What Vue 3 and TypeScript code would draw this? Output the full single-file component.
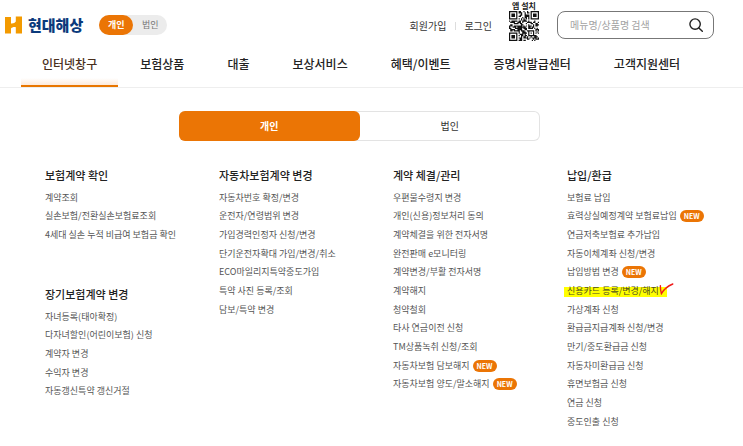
<script setup lang="ts">
import { ref } from 'vue'

interface MenuItem {
  label: string
  isNew?: boolean
  marked?: boolean
}
interface MenuSection {
  title: string
  items: MenuItem[]
}

const customer = ref('개인')
const panelTab = ref('개인')
const customerTypes = ['개인', '법인']
const keyword = ref('')

const mainNav = ['인터넷창구', '보험상품', '대출', '보상서비스', '혜택/이벤트', '증명서발급센터', '고객지원센터']

const plain = (...labels: string[]): MenuItem[] => labels.map((label) => ({ label }))

const columns: MenuSection[][] = [
  [
    {
      title: '보험계약 확인',
      items: plain('계약조회', '실손보험/전환실손보험료조회', '4세대 실손 누적 비급여 보험금 확인'),
    },
    {
      title: '장기보험계약 변경',
      items: plain('자녀등록(태아확정)', '다자녀할인(어린이보험) 신청', '계약자 변경', '수익자 변경', '자동갱신특약 갱신거절'),
    },
  ],
  [
    {
      title: '자동차보험계약 변경',
      items: plain(
        '자동차번호 확정/변경',
        '운전자/연령범위 변경',
        '가입경력인정자 신청/변경',
        '단기운전자확대 가입/변경/취소',
        'ECO마일리지특약중도가입',
        '특약 사진 등록/조회',
        '담보/특약 변경',
      ),
    },
  ],
  [
    {
      title: '계약 체결/관리',
      items: [
        ...plain(
          '우편물수령지 변경',
          '개인(신용)정보처리 동의',
          '계약체결을 위한 전자서명',
          '완전판매 e모니터링',
          '계약변경/부활 전자서명',
          '계약해지',
          '청약철회',
          '타사 연금이전 신청',
          'TM상품녹취 신청/조회',
        ),
        { label: '자동차보험 담보해지', isNew: true },
        { label: '자동차보험 양도/말소해지', isNew: true },
      ],
    },
  ],
  [
    {
      title: '납입/환급',
      items: [
        { label: '보험료 납입' },
        { label: '효력상실예정계약 보험료납입', isNew: true },
        { label: '연금저축보험료 추가납입' },
        { label: '자동이체계좌 신청/변경' },
        { label: '납입방법 변경', isNew: true },
        { label: '신용카드 등록/변경/해지', marked: true },
        ...plain(
          '가상계좌 신청',
          '환급금지급계좌 신청/변경',
          '만기/중도환급금 신청',
          '자동차미환급금 신청',
          '휴면보험금 신청',
          '연금 신청',
          '중도인출 신청',
        ),
      ],
    },
  ],
]

// 25x25 code: three finder squares, one alignment square, data modules elsewhere
const size = 25
function ring(x: number, y: number, cx: number, cy: number): number {
  return Math.max(Math.abs(x - cx), Math.abs(y - cy))
}
function isDark(x: number, y: number): boolean {
  for (const [cx, cy] of [[3, 3], [21, 3], [3, 21]]) {
    const r = ring(x, y, cx, cy)
    if (r <= 4) return r === 3 || r <= 1
  }
  const a = ring(x, y, 18, 18)
  if (a <= 2) return a !== 1
  if (x === 6 || y === 6) return (x + y) % 2 === 0
  const n = Math.sin(x * 12.9898 + y * 78.233) * 43758.5453
  return n - Math.floor(n) < 0.56
}
let qrPath = ''
for (let y = 0; y < size; y++) {
  for (let x = 0; x < size; x++) {
    if (isDark(x, y)) qrPath += `M${x} ${y}h1v1h-1z`
  }
}
</script>

<template>
  <div class="page">
    <header class="top">
      <a class="brand" href="#">
        <svg class="brand-mark" viewBox="0 0 17 18" aria-hidden="true">
          <path fill="#f39a00" d="M0 1H6V7.4C8 7.6 10 7.2 10.8 5.6V0.5H17V17.5H10.8V11.2C9 10.8 7 11.2 6 12.6V17.5H0Z" />
        </svg>
        <span class="brand-name">현대해상</span>
      </a>
      <div class="toggle">
        <button
          v-for="type in customerTypes"
          :key="type"
          type="button"
          :class="['toggle-btn', { on: customer === type }]"
          @click="customer = type"
        >{{ type }}</button>
      </div>
      <div class="account">
        <a href="#">회원가입</a>
        <a href="#" class="login">로그인</a>
      </div>
      <div class="app">
        <span>앱 설치</span>
        <svg class="qr" viewBox="0 0 25 25" aria-hidden="true"><path :d="qrPath" fill="#111" /></svg>
      </div>
      <form class="search" @submit.prevent>
        <input v-model="keyword" type="text" aria-label="메뉴명/상품명 검색" placeholder="메뉴명/상품명 검색" />
        <button type="submit" aria-label="검색">
          <svg viewBox="0 0 14 14" aria-hidden="true">
            <circle cx="6.1" cy="6.1" r="5.2" />
            <path d="M9.9 9.9L13.3 13.3" />
          </svg>
        </button>
      </form>
    </header>

    <nav class="main-nav">
      <a v-for="(name, i) in mainNav" :key="name" href="#" :class="{ current: i === 0 }">{{ name }}</a>
    </nav>

    <main>
      <div class="tabs">
        <button
          v-for="type in customerTypes"
          :key="type"
          type="button"
          :class="['tab', { on: panelTab === type }]"
          @click="panelTab = type"
        >{{ type }}</button>
      </div>

      <div class="columns">
        <div v-for="(sections, c) in columns" :key="c" class="column">
          <section v-for="section in sections" :key="section.title">
            <h2>{{ section.title }}</h2>
            <ul>
              <li v-for="item in section.items" :key="item.label">
                <a href="#" :class="{ marked: item.marked }">{{ item.label }}</a>
                <span v-if="item.isNew" class="badge">NEW</span>
                <svg v-if="item.marked" class="check" viewBox="0 0 15 12" aria-hidden="true">
                  <path d="M1.4 2.6C1.3 5.5 1.6 8 2.4 10.6C5 6 9 3 13.8 1" />
                </svg>
              </li>
            </ul>
          </section>
        </div>
      </div>
    </main>
  </div>
</template>

<style>
body {
  margin: 0;
  background: #fff;
}
</style>

<style scoped>
.page {
  font-family: "Noto Sans CJK KR", "Noto Sans", sans-serif;
  font-size: 9px;
  color: #222;
}
a {
  color: inherit;
  text-decoration: none;
}
button,
input {
  font: inherit;
  color: inherit;
  border: 0;
  padding: 0;
  background: none;
}
button {
  cursor: pointer;
}
.top {
  display: flex;
  align-items: center;
  height: 42px;
  padding: 0 29px 0 5px;
}
.brand {
  display: flex;
  align-items: center;
  gap: 6px;
  margin-top: 8px;
}
.brand-mark {
  width: 17px;
  height: 18px;
}
.brand-name {
  font-size: 15px;
  line-height: 20px;
  font-weight: 900;
  color: #0b3a7c;
}
.toggle {
  display: flex;
  margin: 8px auto 0 16px;
  border-radius: 10px;
  background: #ececec;
}
.toggle-btn {
  width: 34px;
  height: 20px;
  border-radius: 10px;
  line-height: 20px;
  color: #777;
}
.toggle-btn.on {
  background: #eb7505;
  color: #fff;
  font-weight: 700;
}
.account {
  display: flex;
  align-items: center;
  margin-top: 10px;
  font-size: 10px;
  line-height: 16px;
  color: #333;
}
.login {
  display: flex;
  align-items: center;
}
.login::before {
  content: "";
  height: 8px;
  margin: 0 8px 0 9px;
  border-left: 1px solid #ddd;
}
.app {
  display: flex;
  flex-direction: column;
  align-items: center;
  margin: 0 18px 0 17px;
  font-size: 8px;
  line-height: 10px;
  font-weight: 700;
}
.qr {
  width: 30px;
  height: 30px;
}
.search {
  display: flex;
  align-items: center;
  box-sizing: border-box;
  width: 157px;
  height: 28px;
  margin-top: 8px;
  padding: 0 10px 0 12px;
  border: 1px solid #777;
  border-radius: 8px;
}
.search input {
  flex: 1;
  min-width: 0;
  font-size: 10px;
  line-height: 16px;
  outline: 0;
}
.search input::placeholder {
  color: #a3a3a3;
  opacity: 1;
}
.search button,
.search svg {
  display: block;
  width: 14px;
  height: 14px;
}
.search svg {
  fill: none;
  stroke: #222;
  stroke-width: 1.4;
  stroke-linecap: round;
}
.main-nav {
  display: flex;
  gap: 1px;
  padding-left: 21px;
  border-bottom: 1px solid #eee;
  font-size: 12px;
  font-weight: 500;
  line-height: 43px;
  white-space: nowrap;
}
.main-nav a {
  padding: 0 21px;
  border-bottom: 2px solid transparent;
}
.main-nav .current {
  color: #4a2f1c;
  border-bottom-color: #e87600;
  background: linear-gradient(to top, #fdeadb, #fff 7px);
}
.tabs {
  display: flex;
  width: 361px;
  margin: 23px auto 0 179px;
  border-radius: 6px;
  box-shadow: inset 0 0 0 1px #e3e3e3;
}
.tab {
  flex: 1;
  height: 30px;
  border-radius: 6px;
  font-size: 10px;
  line-height: 30px;
  color: #333;
}
.tab.on {
  background: #eb7505;
  color: #fff;
  font-weight: 700;
}
.columns {
  display: grid;
  grid-template-columns: repeat(4, 1fr);
  padding: 24px 2px 0 45px;
}
.column {
  display: flex;
  flex-direction: column;
  gap: 40px;
  min-width: 0;
}
h2 {
  margin: 0 0 3px;
  font-size: 11px;
  line-height: 20px;
  font-weight: 500;
}
ul {
  margin: 0;
  padding: 0;
  list-style: none;
}
li {
  display: flex;
  align-items: center;
  height: 19px;
  line-height: 19px;
  white-space: nowrap;
  color: #555;
}
li:nth-child(3n + 2) {
  height: 18px;
  line-height: 18px;
}
.marked {
  position: relative;
  color: #4d4d22;
}
.marked::before {
  content: "";
  position: absolute;
  z-index: -1;
  inset: 6px -8px 3px -3px;
  background: #ff0;
}
.check {
  width: 15px;
  height: 12px;
  margin-top: -4px;
  z-index: 1;
  fill: none;
  stroke: #f01c1c;
  stroke-width: 1.4;
  stroke-linecap: round;
}
.badge {
  margin-left: 3px;
  padding: 0 4px;
  border-radius: 6px;
  background: #eb7505;
  color: #fff;
  font-size: 7px;
  line-height: 12px;
  font-weight: 700;
}
</style>
